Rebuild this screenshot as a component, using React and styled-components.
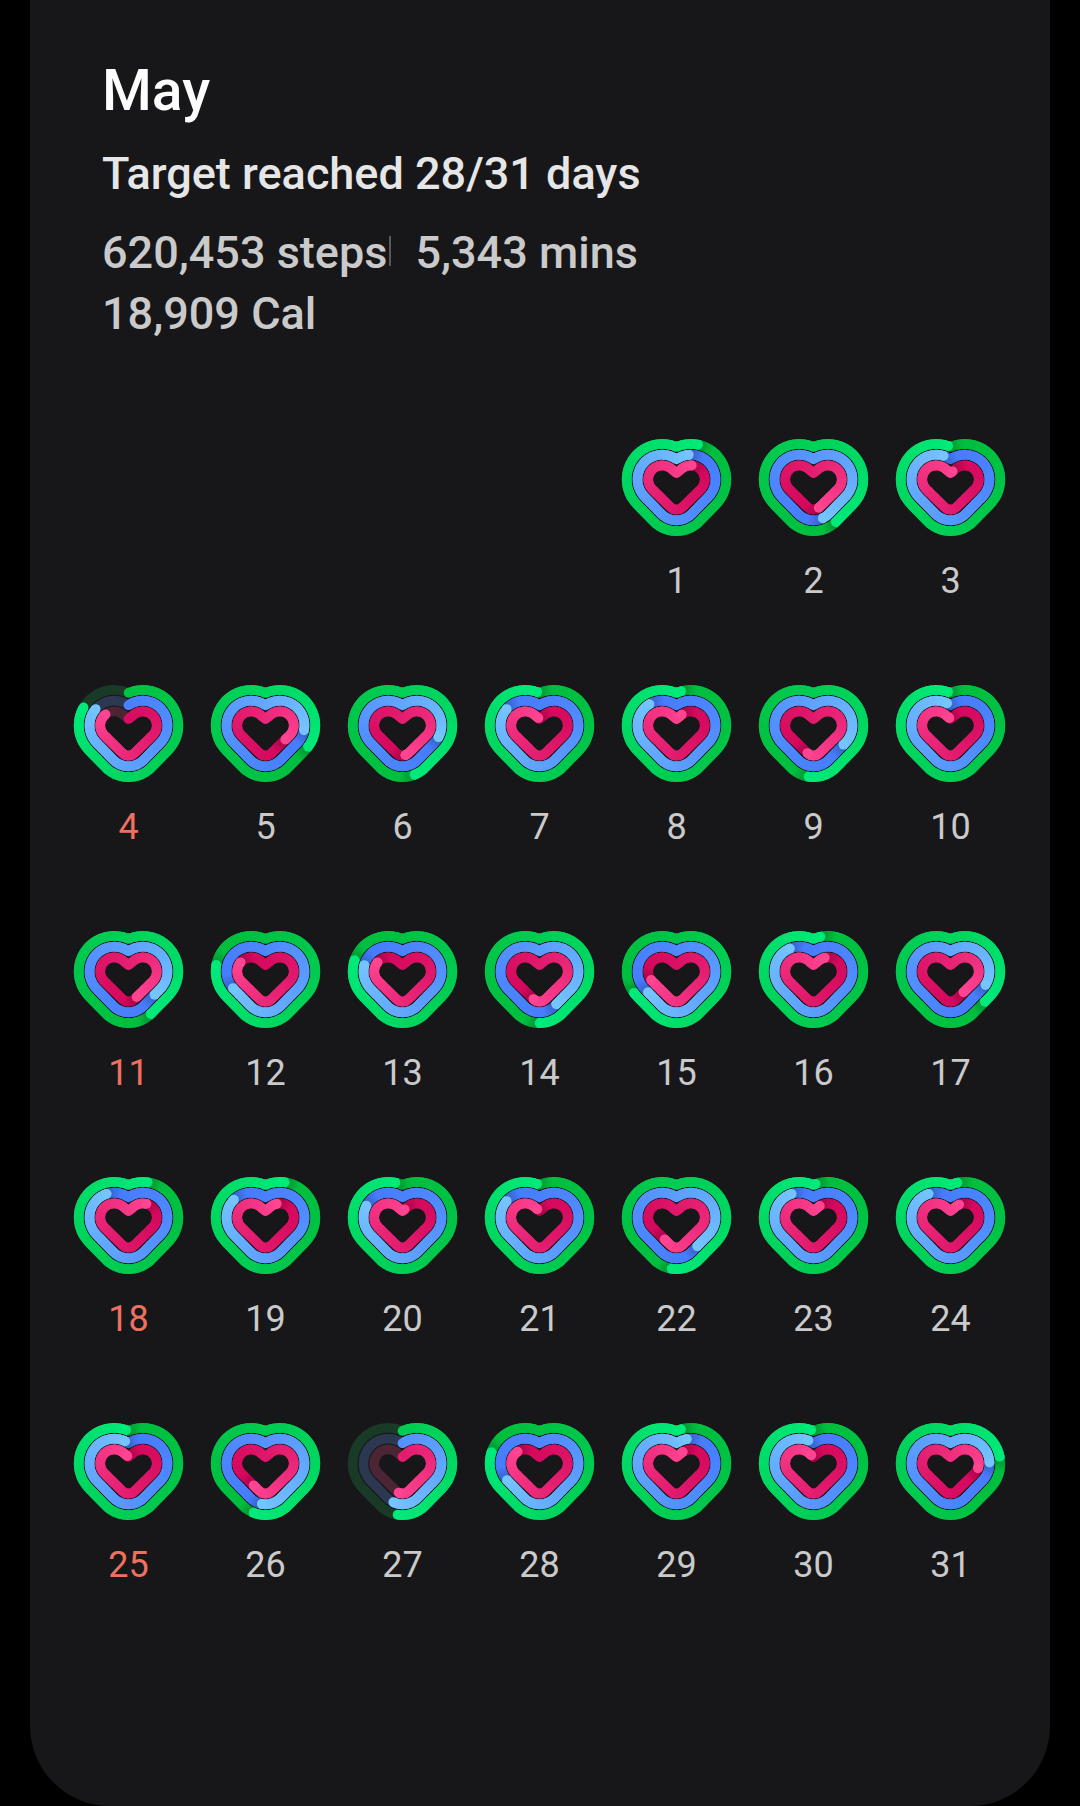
import React from "react";
import styled, { createGlobalStyle } from "styled-components";

// tip of each ring inside the heart: [x, y] from the top centre
const days = [
  { day: 1, tips: [[22, 6], [13, 16], [15, 27]] },
  { day: 2, tips: [[22, 82], [9, 78], [5, 68]] },
  { day: 3, tips: [[-3, 7], [-6, 17], [2, 33]] },
  { day: 4, open: true, tips: [[-46, 22], [-33, 23], [-23, 29]] },
  { day: 5, tips: [[41, 62], [38, 45], [20, 55]] },
  { day: 6, tips: [[11, 89], [35, 52], [3, 70]] },
  { day: 7, tips: [[-3, 7], [-33, 24], [-1, 33]] },
  { day: 8, tips: [[5, 6], [-28, 19], [6, 30]] },
  { day: 9, tips: [[-6, 92], [30, 60], [-6, 68]] },
  { day: 10, tips: [[-3, 7], [-4, 18], [-1, 34]] },
  { day: 11, tips: [[22, 83], [27, 65], [8, 66]] },
  { day: 12, tips: [[-50, 34], [-32, 57], [-25, 31]] },
  { day: 13, tips: [[-49, 29], [-39, 33], [-26, 31]] },
  { day: 14, tips: [[1, 92], [16, 74], [-6, 68]] },
  { day: 15, tips: [[-42, 62], [-29, 61], [-25, 48]] },
  { day: 16, tips: [[8, 6], [-23, 17], [12, 27]] },
  { day: 17, tips: [[34, 70], [35, 53], [13, 62]] },
  { day: 18, tips: [[20, 5], [-23, 16], [18, 27]] },
  { day: 19, tips: [[19, 5], [-32, 22], [11, 28]] },
  { day: 20, tips: [[-6, 6], [-37, 28], [2, 32]] },
  { day: 21, tips: [[-3, 7], [-34, 24], [-2, 33]] },
  { day: 22, tips: [[-6, 92], [20, 70], [-12, 63]] },
  { day: 23, tips: [[3, 7], [-22, 17], [7, 30]] },
  { day: 24, tips: [[8, 6], [-21, 17], [9, 28]] },
  { day: 25, tips: [[-3, 6], [-3, 17], [-1, 34]] },
  { day: 26, tips: [[-11, 90], [-4, 81], [-12, 63]] },
  { day: 27, open: true, tips: [[-6, 92], [-9, 79], [-4, 69]] },
  { day: 28, tips: [[-49, 28], [-33, 57], [-23, 28]] },
  { day: 29, tips: [[5, 6], [10, 16], [7, 29]] },
  { day: 30, tips: [[-3, 7], [-4, 17], [-2, 33]] },
  { day: 31, tips: [[49, 35], [39, 40], [28, 45]] },
];

const STEPS = 120;
const STROKE = 9.7;
const LOBE_X = 14.3;
const LOBE_Y = 40.4;

// two lobe circles and a bottom circle, joined by their tangents
function heartPoints(lobe, bottom, bottomY) {
  const right = [];
  let from = (-130 * Math.PI) / 180;
  if (lobe > LOBE_X + 1) {
    from = -Math.PI + Math.acos(LOBE_X / lobe);
  } else {
    right.push([0, 34]);
  }
  const drop = bottomY - LOBE_Y;
  const to =
    Math.atan2(drop, -LOBE_X) -
    Math.acos((lobe - bottom) / Math.hypot(drop, LOBE_X));
  for (let i = 0; i <= 80; i++) {
    const a = from + ((to - from) * i) / 80;
    right.push([LOBE_X + lobe * Math.cos(a), LOBE_Y + lobe * Math.sin(a)]);
  }
  for (let i = 0; i <= 30; i++) {
    const a = to + ((Math.PI / 2 - to) * i) / 30;
    right.push([bottom * Math.cos(a), bottomY + bottom * Math.sin(a)]);
  }
  const left = right.slice(0, -1).reverse().map(([x, y]) => [-x, y]);
  const all = [...right, ...left];

  const lengths = [0];
  for (let i = 1; i < all.length; i++) {
    lengths.push(
      lengths[i - 1] +
        Math.hypot(all[i][0] - all[i - 1][0], all[i][1] - all[i - 1][1])
    );
  }
  const total = lengths[lengths.length - 1];
  const points = [];
  let k = 1;
  for (let s = 0; s < STEPS; s++) {
    const at = (total * s) / STEPS;
    while (lengths[k] < at) k++;
    const t = (at - lengths[k - 1]) / (lengths[k] - lengths[k - 1] || 1);
    points.push([
      all[k - 1][0] + (all[k][0] - all[k - 1][0]) * t,
      all[k - 1][1] + (all[k][1] - all[k - 1][1]) * t,
    ]);
  }
  return { points, step: total / STEPS };
}

const rings = [
  {
    ...heartPoints(35.5, 32.1, 60),
    dark: [0, 190, 62],
    light: [0, 234, 122],
    track: "#193a26",
  },
  {
    ...heartPoints(24.7, 21.3, 60),
    dark: [70, 124, 255],
    light: [116, 196, 255],
    track: "#2c3750",
  },
  {
    ...heartPoints(14, 8.6, 62),
    dark: [212, 8, 92],
    light: [255, 68, 146],
    track: "#4c2535",
  },
];

const mix = (ring, t, shade = 0) => {
  const c = ring.dark.map((v, i) =>
    Math.round((v + (ring.light[i] - v) * Math.pow(t, 1.5)) * (1 - shade))
  );
  return `rgb(${c.join(",")})`;
};

const toPath = (points) =>
  "M" + points.map(([x, y]) => `${x.toFixed(2)} ${y.toFixed(2)}`).join("L");

const nearest = (points, [x, y]) => {
  let best = 0;
  points.forEach((p, i) => {
    const d = Math.hypot(p[0] - x, p[1] - y);
    if (d < Math.hypot(points[best][0] - x, points[best][1] - y)) best = i;
  });
  return best;
};

function Ring({ ring, tip, open }) {
  const { points, step } = ring;
  const end = nearest(points, tip);
  const start = open ? 0 : end;
  const count = open ? end : STEPS;
  const at = (i) => points[(i + STEPS) % STEPS];
  const tone = (i) => 1 - (count - i) / STEPS;
  const segments = [];
  for (let i = 0; i < count; i++) {
    const last = open && i === count - 1;
    const shade = open ? 0 : Math.max(0, 0.24 * (1 - (i * step) / 14));
    segments.push(
      <path
        key={i}
        d={toPath([
          at(start + i),
          at(start + i + 1),
          ...(last ? [] : [at(start + i + 2)]),
        ])}
        stroke={mix(ring, tone(i), shade)}
      />
    );
  }
  return (
    <g fill="none" strokeWidth={STROKE} strokeLinejoin="round">
      {open && <path d={toPath(points) + "Z"} stroke={ring.track} />}
      {open && (
        <circle
          cx={at(0)[0]}
          cy={at(0)[1]}
          r={STROKE / 2}
          fill={mix(ring, tone(0))}
        />
      )}
      {segments}
      <circle
        cx={at(end)[0]}
        cy={at(end)[1]}
        r={STROKE / 2}
        fill={mix(ring, 1)}
      />
    </g>
  );
}

function Heart({ tips, open }) {
  return (
    <HeartIcon viewBox="-55.5 0 111 97" aria-hidden="true">
      {rings.map((ring, i) => (
        <Ring key={i} ring={ring} tip={tips[i]} open={open} />
      ))}
    </HeartIcon>
  );
}

export default function App() {
  return (
    <>
      <GlobalStyle />
      <Card>
        <Header>
          <Month>May</Month>
          <Target>Target reached 28/31 days</Target>
          <Stats>
            <StatLine>
              <span>620,453 steps</span>
              <Divider />
              <span>5,343 mins</span>
            </StatLine>
            <StatLine>
              <span>18,909 Cal</span>
            </StatLine>
          </Stats>
        </Header>
        <Calendar>
          {days.map(({ day, tips, open }) => (
            <Day key={day}>
              <Heart tips={tips} open={open} />
              <DayNumber $sunday={day % 7 === 4}>{day}</DayNumber>
            </Day>
          ))}
        </Calendar>
      </Card>
    </>
  );
}

const GlobalStyle = createGlobalStyle`
  * {
    box-sizing: border-box;
  }
  body {
    margin: 0;
    background: #000;
    font-family: Roboto, "Liberation Sans", sans-serif;
  }
`;
const Card = styled.main`
  margin: 0 30px;
  padding: 57px 31px 220px 30px;
  min-height: 100vh;
  background: #171719;
  border-radius: 0 0 80px 80px;
`;
const Header = styled.header`
  padding: 0 42px;
`;
const Month = styled.h1`
  margin: 0 0 19px;
  font-size: 57px;
  line-height: 68px;
  font-weight: 500;
  color: #fcfcfc;
`;
const Target = styled.h2`
  margin: 0 0 18px;
  font-size: 45px;
  line-height: 60px;
  font-weight: 500;
  color: #e6e6e6;
`;
const Stats = styled.div`
  font-size: 45px;
  line-height: 61px;
  font-weight: 500;
  color: #cacacb;
`;
const StatLine = styled.div`
  display: flex;
  align-items: center;
`;
const Divider = styled.span`
  width: 2px;
  height: 30px;
  margin: 0 24px 4px 2px;
  background: #59595b;
`;
const Calendar = styled.ol`
  display: grid;
  grid-template-columns: repeat(7, 1fr);
  row-gap: 83px;
  margin: 95px 0 0;
  padding: 0;
  list-style: none;
`;
const Day = styled.li`
  display: flex;
  flex-direction: column;
  align-items: center;
  gap: 24px;
  &:first-child {
    grid-column-start: 5;
  }
`;
const HeartIcon = styled.svg`
  display: block;
  width: 111px;
  height: 97px;
`;
const DayNumber = styled.span`
  font-size: 36px;
  line-height: 42px;
  color: ${(props) => (props.$sunday ? "#f0705f" : "#cacacb")};
`;
